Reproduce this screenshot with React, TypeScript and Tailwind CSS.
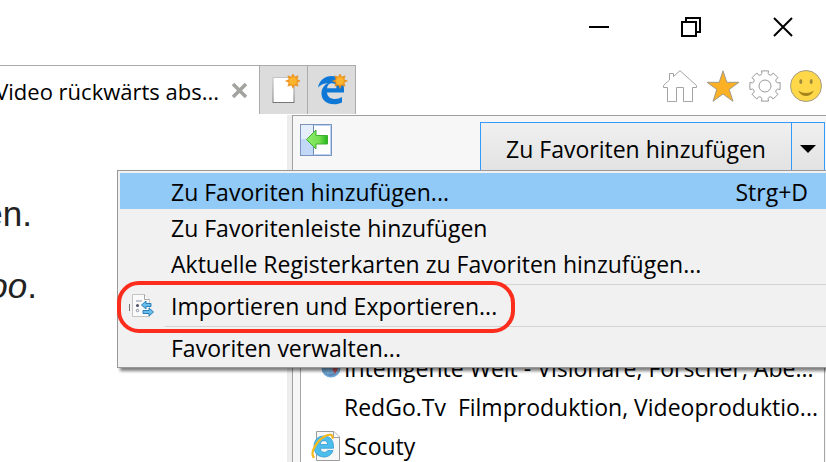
import type { ReactNode } from "react";
import { clsx } from "clsx";

type MenuEntry = {
  label: string;
  shortcut?: string;
  active?: boolean;
  marked?: boolean;
  icon?: ReactNode;
};

const menuGroups: MenuEntry[][] = [
  [
    { label: "Zu Favoriten hinzufügen...", shortcut: "Strg+D", active: true },
    { label: "Zu Favoritenleiste hinzufügen" },
    { label: "Aktuelle Registerkarten zu Favoriten hinzufügen..." },
  ],
  [{ label: "Importieren und Exportieren...", marked: true, icon: <ImportIcon /> }],
  [{ label: "Favoriten verwalten..." }],
];

const favorites = [
  { title: "Intelligente Welt - Visionäre, Forscher, Abe...", icon: <GlobeIcon /> },
  { title: "RedGo.Tv  Filmproduktion, Videoproduktio...", icon: null },
  { title: "Scouty", icon: <IePageIcon /> },
];

// Outline of the eight-toothed gear, centred on 16,16
const gearPoints = Array.from({ length: 8 }, (_, i) =>
  [
    [-19, 12],
    [-14, 13],
    [-13, 15.5],
    [13, 15.5],
    [14, 13],
    [19, 12],
  ].map(([deg, r]) => {
    const a = ((i * 45 + deg - 90) * Math.PI) / 180;
    return `${(16 + r * Math.cos(a)).toFixed(1)},${(16 + r * Math.sin(a)).toFixed(1)}`;
  })
)
  .flat()
  .join(" ");

function Sun({ x, y }: { x: number; y: number }) {
  return (
    <g transform={`translate(${x} ${y})`}>
      <path
        d="M0-7.5 1.5-4 5.2-5.2 4-1.5 7.5 0 4 1.5 5.2 5.2 1.5 4 0 7.5-1.5 4-5.2 5.2-4 1.5-7.5 0-4-1.5-5.2-5.2-1.5-4Z"
        fill="#f0961a"
        stroke="#e88d14"
        strokeWidth="0.5"
      />
      <circle r="3.8" fill="#fdb52e" />
    </g>
  );
}

function NewTabIcon() {
  return (
    <svg width="32" height="32" viewBox="0 0 32 32">
      <defs>
        <linearGradient id="sheet" x1="0" y1="0" x2="0" y2="1">
          <stop offset="0" stopColor="#c4c4c4" />
          <stop offset="1" stopColor="#777" />
        </linearGradient>
      </defs>
      <rect x="5" y="3.5" width="21" height="25" fill="#fff" stroke="url(#sheet)" />
      <Sun x={25} y={7} />
    </svg>
  );
}

function EdgeIcon() {
  return (
    <svg width="32" height="32" viewBox="0 0 32 32">
      <path
        d="M2 13.500C3.500 6 9 2 15.500 2 23.500 2 28 7.500 28 14.500V18.500H11C11.300 23 15 25 19 25 21.500 25 24 24.200 26 23V28.500C23.500 29.700 20.800 30.300 18 30.300 10.500 30.300 5.500 26 5.500 19.500 5.500 14.500 8 11 12 9 8 9.200 4.500 10.800 2 13.500ZM11 14.200H20.500C20.500 11 18.800 9.300 16 9.300 13.300 9.300 11.300 11.300 11 14.200Z"
        fill="#0f78d7"
      />
      <Sun x={24} y={7} />
    </svg>
  );
}

function HomeIcon() {
  return (
    <svg width="34" height="32" viewBox="0 0 34 32" fill="#fff" stroke="#a3a3a3">
      <path d="M17 .7 33.500 15.500V17.500H29.500V31.500H20.500V17.500H13.500V31.500H4.500V17.500H.5V15.500L6.500 10V3.500H10.500V6.500Z" />
    </svg>
  );
}

function StarIcon() {
  return (
    <svg width="34" height="32" viewBox="0 0 34 32">
      <path
        d="M17 .8 20.800 12.300H33L23.200 19.400 27 31.300 17 24 7 31.300 10.800 19.400 1 12.300H13.200Z"
        fill="#fcb125"
        stroke="#a09a8c"
      />
    </svg>
  );
}

function GearIcon() {
  return (
    <svg width="32" height="32" viewBox="0 0 32 32" fill="#fff" stroke="#999" strokeLinejoin="round">
      <polygon points={gearPoints} />
      <circle cx="16" cy="16" r="6" />
    </svg>
  );
}

function SmileyIcon() {
  return (
    <svg width="32" height="32" viewBox="0 0 32 32">
      <circle cx="16" cy="16" r="15.500" fill="#fed849" stroke="#a39c86" />
      <ellipse cx="10.800" cy="11.500" rx="1.500" ry="2.500" fill="#a08a3c" />
      <ellipse cx="21.200" cy="11.500" rx="1.500" ry="2.500" fill="#a08a3c" />
      <path d="M8 20.500Q16 25.500 24 20.500 21 26 16 26 11 26 8 20.500Z" fill="#a6861c" />
    </svg>
  );
}

function DockIcon() {
  return (
    <svg width="32" height="32" viewBox="0 0 32 32">
      <defs>
        <linearGradient id="arrow" x1="0" y1="0" x2="1" y2="0">
          <stop offset="0" stopColor="#8fec6a" />
          <stop offset="0.600" stopColor="#76e052" />
          <stop offset="1" stopColor="#25b51b" />
        </linearGradient>
      </defs>
      <rect x="0.500" y="0.500" width="31" height="31" fill="#fff" stroke="#7c94bd" />
      <path d="M1 1H13V15H1Z" fill="#e5eefb" />
      <path d="M1 15H13V31H1Z" fill="#c2d8f7" />
      <path d="M13.500 1V31" stroke="#7088b4" />
      <path d="M14.500 1.500H30.500V30.500H14.500" fill="none" stroke="#b9d2f5" />
      <path d="M6.500 15.500 16 6V11.500H27.500V20H16V25Z" fill="url(#arrow)" stroke="#3fae31" />
    </svg>
  );
}

function ImportIcon() {
  return (
    <svg width="26" height="26" viewBox="0 0 26 26">
      <path d="M.5 11V18" stroke="#777" />
      <path d="M3.500 1.500H15.500L20.500 6.500V23.500H3.500Z" fill="#fafafa" stroke="#c4c4c4" />
      <path d="M15.500 1.500V6.500H20.500" fill="#fff" stroke="#a8a8a8" />
      <path d="M7 8H13" stroke="#8d92a8" />
      <circle cx="8.500" cy="12.500" r="1.500" fill="#4b4e66" />
      <circle cx="8.500" cy="17.500" r="1.200" fill="#fff" stroke="#85889a" />
      <path d="M12.500 12 17 8V10.500H22V13.500H17V16Z" fill="#67bdec" stroke="#2a7fb8" />
      <path d="M24.500 19 20 15V17.500H14V20.500H20V23Z" fill="#67bdec" stroke="#2a7fb8" />
    </svg>
  );
}

function GlobeIcon() {
  return (
    <svg width="20" height="20" viewBox="0 0 20 20">
      <circle cx="10" cy="10" r="9.500" fill="#6ba3cf" />
      <path d="M2 8H18M2 12H18M7 1V19M12 1V19" stroke="#8fbbdc" strokeWidth="0.700" />
      <path d="M11 9 18 8 16 13 14 16 12 13Z" fill="#b5525a" />
      <path d="M4 16Q10 20 15 16L13 15Q9 17 4 16Z" fill="#5c86b8" />
    </svg>
  );
}

function IePageIcon() {
  return (
    <svg width="30" height="32" viewBox="0 0 30 32">
      <path d="M5.500 1.500H23L28.500 7V30.500H5.500Z" fill="#f7f7f7" stroke="#9d9d9d" />
      <path d="M22.500 1.500V7.500H28.500" fill="#fff" stroke="#9d9d9d" />
      <path
        d="M12.800 6C18.800 6 22.500 10 22.500 16.500V18.300H9.200C9.400 21 11 22.300 13.200 22.300 15 22.300 16 21.600 16.600 20.500H22C20.800 24.500 17.500 27 13 27 7 27 3 23 3 16.500S7 6 12.800 6ZM9.200 14.500H16.700C16.500 12 15.200 10.700 13 10.700 10.800 10.700 9.500 12 9.200 14.500Z"
        fill="#4dbdec"
        stroke="#2893ce"
        strokeWidth="0.700"
      />
      <path
        d="M2.500 27C-1 22 6 10 15 5.800 19 4 22 4.500 21.500 8"
        fill="none"
        stroke="#f5b91c"
        strokeWidth="2.200"
        strokeLinecap="round"
      />
    </svg>
  );
}

function TitleBar() {
  return (
    <header className="flex h-[65px] shrink-0 items-start justify-end gap-[72px] pt-[17px] pr-[33px]">
      <button type="button" aria-label="Minimieren">
        <svg width="20" height="20" viewBox="0 0 20 20">
          <path d="M0 10H20" stroke="#000" strokeWidth="2" />
        </svg>
      </button>
      <button type="button" aria-label="Verkleinern">
        <svg width="20" height="20" viewBox="0 0 20 20" fill="none" stroke="#000" strokeWidth="2">
          <path d="M1 5H15V19H1Z" />
          <path d="M5 5V1H19V15H15" />
        </svg>
      </button>
      <button type="button" aria-label="Schließen">
        <svg width="20" height="20" viewBox="0 0 20 20">
          <path d="M1 1 19 19M19 1 1 19" stroke="#000" strokeWidth="2" />
        </svg>
      </button>
    </header>
  );
}

function TabBar() {
  return (
    <div className="flex h-[49px] shrink-0 justify-between pr-1">
      <div className="flex border-t border-[#ababab]">
        <div className="flex w-[259px] items-center gap-3 overflow-hidden pr-[11px]">
          <div className="flex min-w-0 flex-1 justify-end pt-0.5 text-[22px] leading-8 whitespace-nowrap">
            Video rückwärts abs...
          </div>
          <button type="button" aria-label="Tab schließen">
            <svg width="17" height="17" viewBox="0 0 17 17">
              <path d="M2 2 15 15M15 2 2 15" stroke="#a3a3a0" strokeWidth="3.600" />
            </svg>
          </button>
        </div>
        <button type="button" aria-label="Neue Registerkarte" className="flex w-12 items-center justify-center border-l border-[#ababab] bg-[#dcdcdc]">
          <NewTabIcon />
        </button>
        <button type="button" aria-label="In Edge öffnen" className="flex w-[49px] items-center justify-center border-x border-[#ababab] bg-[#dcdcdc]">
          <EdgeIcon />
        </button>
      </div>

      <nav className="flex items-start gap-[9px] pt-[5px]">
        <button type="button" aria-label="Startseite"><HomeIcon /></button>
        <button type="button" aria-label="Favoriten"><StarIcon /></button>
        <button type="button" aria-label="Extras"><GearIcon /></button>
        <button type="button" aria-label="Feedback"><SmileyIcon /></button>
      </nav>
    </div>
  );
}

function MenuItem({ label, shortcut, active, marked, icon }: MenuEntry) {
  return (
    <button
      type="button"
      role="menuitem"
      className={clsx("relative flex h-9 w-full items-center pr-[18px] pt-0.5 text-left", active && "bg-[#91c9f7]")}
    >
      <span className="flex w-[51px] shrink-0 pl-[9px]">{icon}</span>
      <span className="flex-1 whitespace-pre">{label}</span>
      {shortcut && <span>{shortcut}</span>}
      {marked && (
        <span className="absolute -top-1.5 -left-[3px] h-[52px] w-[398px] rounded-[22px] border-4 border-[#fc2d1c]" />
      )}
    </button>
  );
}

function FavoritesMenu() {
  return (
    <div
      role="menu"
      className="absolute top-14 right-0 left-[117px] z-10 border border-r-0 border-[#989898] bg-[#f1f1f1] py-0.5 pl-0.5 shadow-[3px_3px_3px_rgba(0,0,0,0.5)]"
    >
      {menuGroups.map((group, i) => (
        <div key={i}>
          {i > 0 && (
            <div className="flex h-1.5 items-center pl-[45px]">
              <div className="h-px flex-1 bg-[#d4d4d4]" />
            </div>
          )}
          {group.map((entry) => (
            <MenuItem key={entry.label} {...entry} />
          ))}
        </div>
      ))}
    </div>
  );
}

export default function App() {
  return (
    <div className="flex h-screen flex-col overflow-hidden bg-white font-['Open_Sans','Noto_Sans',sans-serif] text-[23px] leading-8 text-black">
      <TitleBar />
      <TabBar />

      <main className="relative flex min-h-0 flex-1 pt-px">
        {/* Page content */}
        <article className="w-[287px] shrink-0 overflow-hidden pt-[79px] font-['Liberation_Sans',sans-serif] text-[35px] leading-[40px] text-[#222]">
          <p className="flex w-8 justify-end">en.</p>
          <p className="mt-8 flex w-[37px] justify-end">
            <em>oo</em>.
          </p>
        </article>

        {/* Favorites panel */}
        <aside className="flex min-w-0 flex-1 flex-col border-l-[5px] border-[#ededed]">
          <div className="flex min-h-0 flex-1 flex-col border-t border-l border-[#a0a0a0] bg-[#f7f7f7] pl-[7px]">
            <div className="flex justify-between pt-1.5 pr-px">
              <button type="button" aria-label="Favoritencenter anheften" className="mt-0.5 self-start">
                <DockIcon />
              </button>
              <div className="flex h-[54px] border border-[#3399ff] bg-linear-to-b from-[#f0f0f0] to-[#e1e1e1]">
                <button type="button" className="w-[310px]">Zu Favoriten hinzufügen</button>
                <button type="button" aria-label="Menü öffnen" className="flex w-[33px] items-center justify-center border-l border-[#3399ff]">
                  <svg width="16" height="8" viewBox="0 0 16 8">
                    <path d="M0 0H16L8 8Z" fill="#000" />
                  </svg>
                </button>
              </div>
            </div>
            <ul className="mr-px min-h-0 flex-1 overflow-hidden border-x border-[#a5a5a5] bg-white pt-[172px]">
              {favorites.map((fav) => (
                <li key={fav.title} className="flex h-[39px] items-center gap-[3px] pl-[9px]">
                  <span className="flex w-[31px] shrink-0 justify-end">{fav.icon}</span>
                  <a href="#" className="whitespace-pre">{fav.title}</a>
                </li>
              ))}
            </ul>
          </div>
        </aside>

        <FavoritesMenu />
      </main>
    </div>
  );
}
